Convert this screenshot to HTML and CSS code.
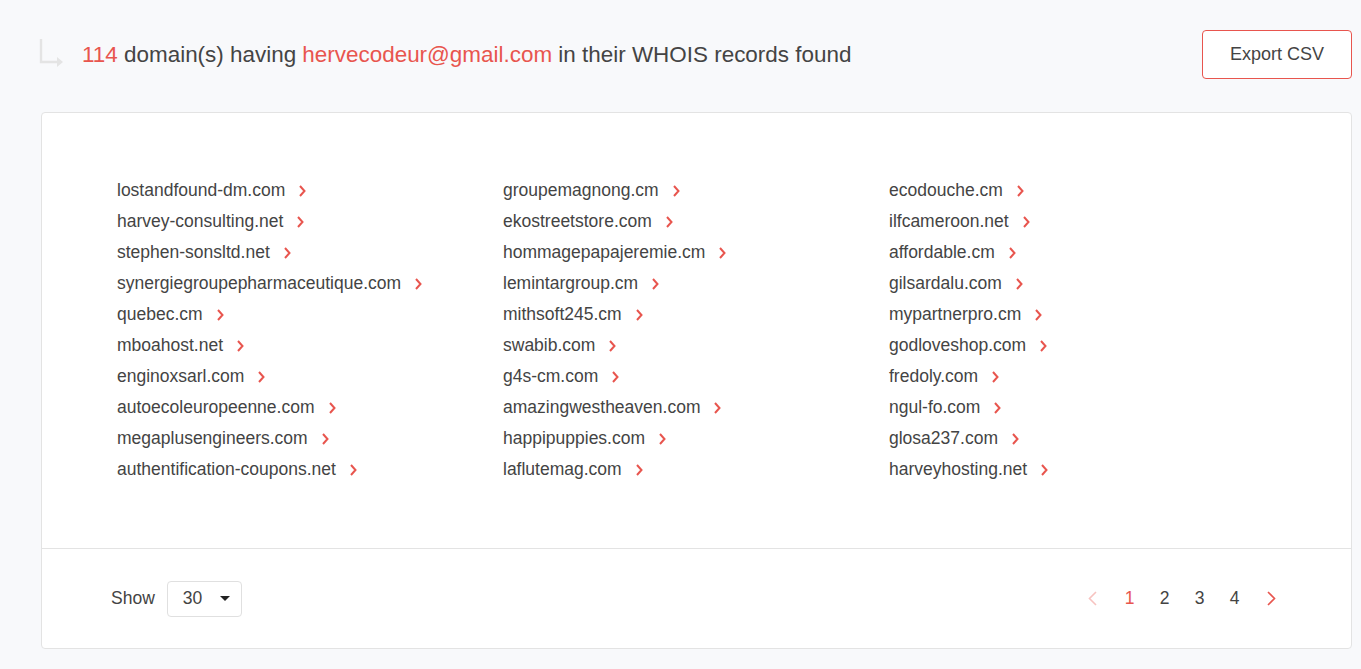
FILE: index.html
```html
<!DOCTYPE html>
<html>
<head>
<meta charset="utf-8">
<link rel="stylesheet" href="styles.css">
</head>
<body>
<div class="page">
  <div class="header">
    <div class="title">
      <svg class="turn" width="26" height="30" viewBox="0 0 26 30"><path d="M2 0 V23 H19" fill="none" stroke="#e4e4e4" stroke-width="2.4"/><path d="M18 18 L24 23 L18 28 Z" fill="#e4e4e4"/></svg>
      <h1><span class="red">114</span> domain(s) having <span class="red">hervecodeur@gmail.com</span> in their WHOIS records found</h1>
    </div>
    <button class="export">Export CSV</button>
  </div>
  <div class="card">
    <div class="list">
      <ul class="col">
        <li><a>lostandfound-dm.com</a><svg class="chev" viewBox="0 0 7 12"><path d="M1 1 L5.5 6 L1 11"/></svg></li>
        <li><a>harvey-consulting.net</a><svg class="chev" viewBox="0 0 7 12"><path d="M1 1 L5.5 6 L1 11"/></svg></li>
        <li><a>stephen-sonsltd.net</a><svg class="chev" viewBox="0 0 7 12"><path d="M1 1 L5.5 6 L1 11"/></svg></li>
        <li><a>synergiegroupepharmaceutique.com</a><svg class="chev" viewBox="0 0 7 12"><path d="M1 1 L5.5 6 L1 11"/></svg></li>
        <li><a>quebec.cm</a><svg class="chev" viewBox="0 0 7 12"><path d="M1 1 L5.5 6 L1 11"/></svg></li>
        <li><a>mboahost.net</a><svg class="chev" viewBox="0 0 7 12"><path d="M1 1 L5.5 6 L1 11"/></svg></li>
        <li><a>enginoxsarl.com</a><svg class="chev" viewBox="0 0 7 12"><path d="M1 1 L5.5 6 L1 11"/></svg></li>
        <li><a>autoecoleuropeenne.com</a><svg class="chev" viewBox="0 0 7 12"><path d="M1 1 L5.5 6 L1 11"/></svg></li>
        <li><a>megaplusengineers.com</a><svg class="chev" viewBox="0 0 7 12"><path d="M1 1 L5.5 6 L1 11"/></svg></li>
        <li><a>authentification-coupons.net</a><svg class="chev" viewBox="0 0 7 12"><path d="M1 1 L5.5 6 L1 11"/></svg></li>
      </ul>
      <ul class="col">
        <li><a>groupemagnong.cm</a><svg class="chev" viewBox="0 0 7 12"><path d="M1 1 L5.5 6 L1 11"/></svg></li>
        <li><a>ekostreetstore.com</a><svg class="chev" viewBox="0 0 7 12"><path d="M1 1 L5.5 6 L1 11"/></svg></li>
        <li><a>hommagepapajeremie.cm</a><svg class="chev" viewBox="0 0 7 12"><path d="M1 1 L5.5 6 L1 11"/></svg></li>
        <li><a>lemintargroup.cm</a><svg class="chev" viewBox="0 0 7 12"><path d="M1 1 L5.5 6 L1 11"/></svg></li>
        <li><a>mithsoft245.cm</a><svg class="chev" viewBox="0 0 7 12"><path d="M1 1 L5.5 6 L1 11"/></svg></li>
        <li><a>swabib.com</a><svg class="chev" viewBox="0 0 7 12"><path d="M1 1 L5.5 6 L1 11"/></svg></li>
        <li><a>g4s-cm.com</a><svg class="chev" viewBox="0 0 7 12"><path d="M1 1 L5.5 6 L1 11"/></svg></li>
        <li><a>amazingwestheaven.com</a><svg class="chev" viewBox="0 0 7 12"><path d="M1 1 L5.5 6 L1 11"/></svg></li>
        <li><a>happipuppies.com</a><svg class="chev" viewBox="0 0 7 12"><path d="M1 1 L5.5 6 L1 11"/></svg></li>
        <li><a>laflutemag.com</a><svg class="chev" viewBox="0 0 7 12"><path d="M1 1 L5.5 6 L1 11"/></svg></li>
      </ul>
      <ul class="col">
        <li><a>ecodouche.cm</a><svg class="chev" viewBox="0 0 7 12"><path d="M1 1 L5.5 6 L1 11"/></svg></li>
        <li><a>ilfcameroon.net</a><svg class="chev" viewBox="0 0 7 12"><path d="M1 1 L5.5 6 L1 11"/></svg></li>
        <li><a>affordable.cm</a><svg class="chev" viewBox="0 0 7 12"><path d="M1 1 L5.5 6 L1 11"/></svg></li>
        <li><a>gilsardalu.com</a><svg class="chev" viewBox="0 0 7 12"><path d="M1 1 L5.5 6 L1 11"/></svg></li>
        <li><a>mypartnerpro.cm</a><svg class="chev" viewBox="0 0 7 12"><path d="M1 1 L5.5 6 L1 11"/></svg></li>
        <li><a>godloveshop.com</a><svg class="chev" viewBox="0 0 7 12"><path d="M1 1 L5.5 6 L1 11"/></svg></li>
        <li><a>fredoly.com</a><svg class="chev" viewBox="0 0 7 12"><path d="M1 1 L5.5 6 L1 11"/></svg></li>
        <li><a>ngul-fo.com</a><svg class="chev" viewBox="0 0 7 12"><path d="M1 1 L5.5 6 L1 11"/></svg></li>
        <li><a>glosa237.com</a><svg class="chev" viewBox="0 0 7 12"><path d="M1 1 L5.5 6 L1 11"/></svg></li>
        <li><a>harveyhosting.net</a><svg class="chev" viewBox="0 0 7 12"><path d="M1 1 L5.5 6 L1 11"/></svg></li>
      </ul>
    </div>
    <div class="footer">
      <div class="show">
        <span>Show</span>
        <div class="select"><span>30</span><i class="caret"></i></div>
      </div>
      <div class="pager">
        <span class="pg arrow"><svg class="pchev light" viewBox="0 0 9 15"><path d="M8 1 L1.5 7.5 L8 14"/></svg></span>
        <span class="pg active">1</span>
        <span class="pg">2</span>
        <span class="pg">3</span>
        <span class="pg">4</span>
        <span class="pg arrow"><svg class="pchev" viewBox="0 0 9 15"><path d="M1 1 L7.5 7.5 L1 14"/></svg></span>
      </div>
    </div>
  </div>
</div>
</body>
</html>
```
FILE: styles.css
```css
* { box-sizing: border-box; }
html, body { margin: 0; padding: 0; }
body {
  background: #f8f9fb;
  font-family: "Liberation Sans", Arial, sans-serif;
  color: #444;
}
.page { padding: 30px 9px 0 41px; }
.header {
  display: flex;
  justify-content: space-between;
  align-items: center;
  height: 49px;
  margin-bottom: 33px;
}
.title { display: flex; align-items: center; }
.turn { margin: 0 17px 0 -2px; position: relative; top: -1px; }
h1 {
  margin: 0;
  font-size: 22.45px;
  font-weight: normal;
  color: #444;
}
.red { color: #e8554e; }
.export {
  width: 150px;
  height: 49px;
  border: 1px solid #e8554e;
  border-radius: 4px;
  background: #fff;
  font-family: inherit;
  font-size: 18px;
  color: #444;
}
.card {
  background: #fff;
  border: 1px solid #e3e3e3;
  border-radius: 4px;
}
.list {
  display: grid;
  grid-template-columns: 386px 386px 386px;
  padding: 62px 0 63px 75px;
  border-bottom: 1px solid #e3e3e3;
}
.col { list-style: none; margin: 0; padding: 0; }
.col li {
  height: 31px;
  display: flex;
  align-items: center;
  font-size: 17.5px;
  color: #444;
}
.col li a { color: #444; }
.chev {
  width: 7px;
  height: 12px;
  margin-left: 14px;
  fill: none;
  stroke: #e8554e;
  stroke-width: 2;
}
.footer {
  height: 99px;
  display: flex;
  align-items: center;
  justify-content: space-between;
  padding: 0 60px 0 69px;
}
.show { display: flex; align-items: center; font-size: 17.5px; color: #444; }
.select {
  margin-left: 12px;
  width: 75px;
  height: 36px;
  border: 1px solid #e0e0e0;
  border-radius: 4px;
  display: flex;
  align-items: center;
  justify-content: space-between;
  padding: 0 11px 0 15px;
  font-size: 17.5px;
}
.caret {
  width: 0; height: 0;
  border-left: 5px solid transparent;
  border-right: 5px solid transparent;
  border-top: 5px solid #222;
}
.pager { display: flex; align-items: center; font-size: 17.5px; }
.pg { width: 35px; text-align: center; color: #444; }
.pg.arrow { width: 39px; display: flex; justify-content: center; }
.pg.active { color: #e8554e; }
.pchev {
  width: 9px;
  height: 15px;
  fill: none;
  stroke: #e8554e;
  stroke-width: 1.6;
}
.pchev.light { stroke: #f7c3c0; }
```
